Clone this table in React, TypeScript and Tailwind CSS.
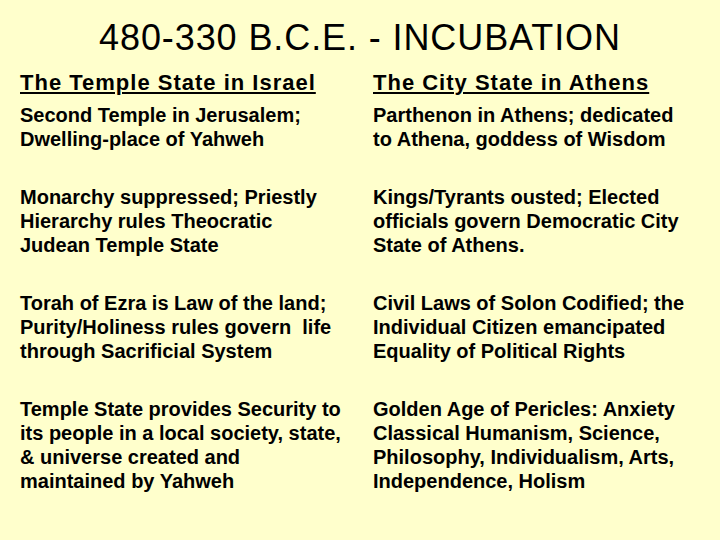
const rows: [string[], string[]][] = [
  [
    ['Second Temple in Jerusalem;', 'Dwelling-place of Yahweh'],
    ['Parthenon in Athens; dedicated', 'to Athena, goddess of Wisdom'],
  ],
  [
    ['Monarchy suppressed; Priestly', 'Hierarchy rules Theocratic', 'Judean Temple State'],
    ['Kings/Tyrants ousted; Elected', 'officials govern Democratic City', 'State of Athens.'],
  ],
  [
    ['Torah of Ezra is Law of the land;', 'Purity/Holiness rules govern  life', 'through Sacrificial System'],
    ['Civil Laws of Solon Codified; the', 'Individual Citizen emancipated', 'Equality of Political Rights'],
  ],
  [
    ['Temple State provides Security to', 'its people in a local society, state,', '& universe created and', 'maintained by Yahweh'],
    ['Golden Age of Pericles: Anxiety', 'Classical Humanism, Science,', 'Philosophy, Individualism, Arts,', 'Independence, Holism'],
  ],
]

const Lines = ({ lines }: { lines: string[] }) => (
  <div className="text-[20px] leading-[24px] font-bold whitespace-pre">
    {lines.map((l, i) => (
      <div key={i}>{l}</div>
    ))}
  </div>
)

export default function App() {
  return (
    <div
      className="w-[720px] h-[540px] bg-[#ffffcc] text-black overflow-hidden"
      style={{ fontFamily: '"Liberation Sans", Arial, sans-serif' }}
    >
      <h1 className="pt-[16px] text-center text-[36px] leading-[44px] tracking-[0.9px]">
        480-330 B.C.E. - INCUBATION
      </h1>
      <div className="grid grid-cols-[353px_1fr] pl-[20px] mt-[9px]">
        <div className="text-[22px] leading-[28px] font-bold tracking-[1px] underline decoration-2 underline-offset-[2px]">
          The Temple State in Israel
        </div>
        <div className="text-[22px] leading-[28px] font-bold tracking-[1px] underline decoration-2 underline-offset-[2px]">
          The City State in Athens
        </div>
      </div>
      <div className="flex flex-col gap-[34px] pl-[20px] mt-[6px]">
        {rows.map(([a, b], i) => (
          <div key={i} className="grid grid-cols-[353px_1fr]">
            <Lines lines={a} />
            <Lines lines={b} />
          </div>
        ))}
      </div>
    </div>
  )
}
